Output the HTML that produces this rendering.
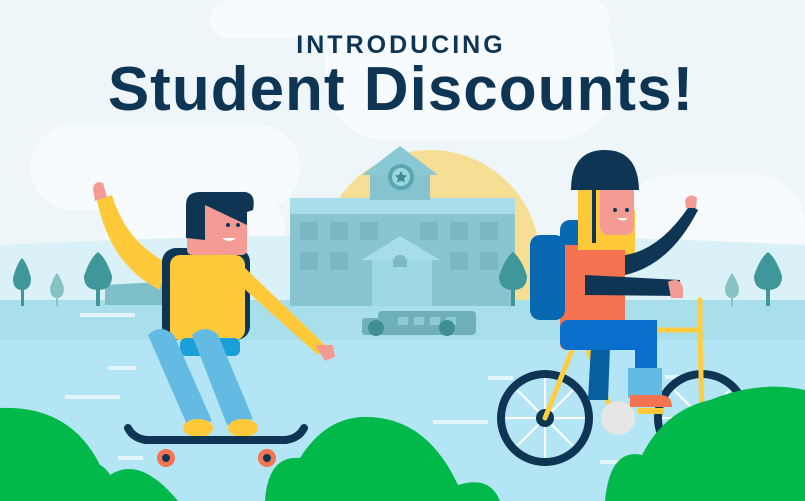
<!DOCTYPE html>
<html><head><meta charset="utf-8"><style>
html,body{margin:0;padding:0;width:805px;height:501px;overflow:hidden;background:#eef6fa}
svg{display:block}
</style></head><body>
<svg width="805" height="501" viewBox="0 0 805 501" xmlns="http://www.w3.org/2000/svg">
<rect width="805" height="501" fill="#eef6fa"/>
<g fill="#f7fbfd">
<rect x="210" y="0" width="400" height="38" rx="19"/>
<rect x="325" y="0" width="290" height="140" rx="60"/>
<rect x="30" y="125" width="270" height="85" rx="42"/>
<rect x="105" y="190" width="180" height="88" rx="40"/>
<rect x="620" y="175" width="185" height="110" rx="50"/>
<rect x="530" y="255" width="240" height="60" rx="30"/>
</g>
<path d="M0 245 Q400 225 805 245 L805 310 L0 310Z" fill="#d9f1f7"/>
<circle cx="430" cy="260" r="110" fill="#f6df95"/>
<rect x="0" y="300" width="805" height="40" fill="#a9dfeb"/>
<rect x="0" y="340" width="805" height="161" fill="#b4e5f4"/>
<path d="M105 285 L160 282 L200 305 L105 305Z" fill="#7fbfca"/>
<rect x="290" y="198" width="225" height="108" fill="#88c5d1"/>
<rect x="290" y="198" width="225" height="16" fill="#a8dde9"/>
<g fill="#7ab8c4">
<rect x="300" y="222" width="18" height="18"/><rect x="330" y="222" width="18" height="18"/><rect x="360" y="222" width="18" height="18"/><rect x="420" y="222" width="18" height="18"/><rect x="450" y="222" width="18" height="18"/><rect x="480" y="222" width="18" height="18"/>
<rect x="300" y="252" width="18" height="18"/><rect x="330" y="252" width="18" height="18"/><rect x="450" y="252" width="18" height="18"/><rect x="480" y="252" width="18" height="18"/>
</g>
<rect x="370" y="172" width="60" height="28" fill="#86c3cf"/>
<path d="M362 175 L400 146 L438 175Z" fill="#8ac8d4"/>
<circle cx="401" cy="177" r="13" fill="#5aa6ae"/><circle cx="401" cy="177" r="9" fill="#9ad6e0"/>
<path d="M401 171 l2 4 4 .5 -3 3 1 4 -4-2 -4 2 1-4 -3-3 4-.5z" fill="#3f8d94"/>
<rect x="372" y="258" width="60" height="48" fill="#9ed8e3"/>
<path d="M362 260 L400 236 L440 260Z" fill="#a6dde8"/>
<path d="M393 262 a7 7 0 0 1 14 0 v5 h-14z" fill="#7ab8c4"/>
<rect x="378" y="311" width="98" height="24" rx="4" fill="#6fb0b8"/>
<rect x="362" y="318" width="20" height="17" rx="3" fill="#6fb0b8"/>
<g fill="#8ccbd5"><rect x="398" y="317" width="10" height="8"/><rect x="414" y="317" width="10" height="8"/><rect x="430" y="317" width="10" height="8"/><rect x="446" y="317" width="10" height="8"/></g>
<circle cx="376" cy="328" r="8" fill="#3e8f92"/><circle cx="447" cy="328" r="8" fill="#3e8f92"/>
<g fill="#3f9799">
<path d="M22 290 q-9 0 -9-12 q4-15 9-20 q5 5 9 20 q0 12 -9 12z"/><rect x="21" y="288" width="3" height="18"/>
<path d="M98 290 q-14 0 -14-14 q6-18 14-24 q8 6 14 24 q0 14 -14 14z"/><rect x="96" y="288" width="4" height="18"/>
<path d="M513 290 q-14 0 -14-14 q6-18 14-24 q8 6 14 24 q0 14 -14 14z"/><rect x="511" y="288" width="4" height="18"/>
<path d="M768 290 q-14 0 -14-14 q6-18 14-24 q8 6 14 24 q0 14 -14 14z"/><rect x="766" y="288" width="4" height="18"/>
</g>
<g fill="#86c1c4">
<path d="M57 298 q-7 0 -7-10 q3-10 7-15 q4 5 7 15 q0 10 -7 10z"/><rect x="56" y="296" width="2" height="10"/>
<path d="M732 298 q-7 0 -7-10 q3-10 7-15 q4 5 7 15 q0 10 -7 10z"/><rect x="731" y="296" width="2" height="10"/>
</g>
<g fill="#e4f6fb"><rect x="80" y="313" width="55" height="4"/><rect x="108" y="366" width="28" height="4"/><rect x="65" y="395" width="55" height="4"/><rect x="433" y="420" width="55" height="4"/><rect x="488" y="376" width="25" height="4"/><rect x="665" y="375" width="30" height="4"/><rect x="600" y="460" width="55" height="4"/><rect x="118" y="456" width="25" height="4"/></g>
<text x="401" y="53" text-anchor="middle" font-family="Liberation Sans, sans-serif" font-weight="bold" font-size="25" letter-spacing="3" fill="#0e3553">INTRODUCING</text>
<text x="401" y="110" text-anchor="middle" font-family="Liberation Sans, sans-serif" font-weight="bold" font-size="62" letter-spacing="1" fill="#0e3553">Student Discounts!</text>

<g>
<path d="M97 200 L112 195 Q125 240 165 262 L160 290 Q110 265 97 200Z" fill="#ffc93a"/>
<path d="M93 188 q2-8 10-5 l4 14 -12 4z" fill="#f49c93"/>
<rect x="162" y="248" width="88" height="92" rx="14" fill="#0e3553"/>
<rect x="170" y="255" width="75" height="85" rx="10" fill="#ffc93a"/>
<path d="M245 268 L325 345 L318 355 L240 285Z" fill="#ffc93a"/>
<path d="M315 345 l18 0 l2 12 l-10 4z" fill="#f49c93"/>
<rect x="187" y="195" width="60" height="60" rx="5" fill="#f49c93"/>
<path d="M186 238 L186 205 Q186 192 200 192 L240 192 Q257 190 253 210 L247 212 L247 225 L205 205 L205 240Z" fill="#0e3553"/>
<circle cx="228" cy="225" r="2" fill="#0e3553"/><circle cx="238" cy="225" r="2" fill="#0e3553"/>
<path d="M222 238 q8 6 14 0z" fill="#fff"/>
<rect x="180" y="338" width="60" height="18" rx="6" fill="#1b9fd8"/>
<path d="M148 335 q12-12 26 0 l38 86 -24 6z" fill="#63bbe3"/>
<path d="M192 335 q14-12 26 0 l35 84 -26 6z" fill="#63bbe3"/>
<ellipse cx="198" cy="428" rx="15" ry="9" fill="#ffc93a"/><ellipse cx="243" cy="428" rx="15" ry="9" fill="#ffc93a"/>
<path d="M128 428 q5 10 18 12 l140 0 q13-2 18-12" stroke="#0e3553" stroke-width="8" fill="none" stroke-linecap="round"/>
<circle cx="166" cy="458" r="9" fill="#f47451"/><circle cx="166" cy="458" r="4" fill="#0e3553"/>
<circle cx="267" cy="458" r="9" fill="#f47451"/><circle cx="267" cy="458" r="4" fill="#0e3553"/>
</g>
<g>
<circle cx="545" cy="418" r="44" fill="none" stroke="#0e3553" stroke-width="8"/>
<circle cx="702" cy="418" r="44" fill="none" stroke="#0e3553" stroke-width="8"/>
<g stroke="#fff" stroke-width="2"><path d="M545 378 V458 M505 418 H585 M517 390 L573 446 M573 390 L517 446"/><path d="M702 378 V458 M662 418 H742 M674 390 L730 446 M730 390 L674 446"/></g>
<circle cx="545" cy="418" r="9" fill="#0e3553"/><circle cx="702" cy="418" r="9" fill="#0e3553"/>
<path d="M545 418 L580 330 L700 330 L702 418 M580 330 L615 420 M700 300 L700 330" stroke="#ffcd3f" stroke-width="5" fill="none" stroke-linecap="round"/>
<path d="M580 305 h20" stroke="#0e3553" stroke-width="8" stroke-linecap="round"/>
<path d="M603 300 q-10 0 -10 10 l-5 90 l20 0 l3-80z" fill="#075f9f"/>
<circle cx="618" cy="418" r="17" fill="#e6e6e6"/>
<rect x="560" y="220" width="55" height="45" rx="10" fill="#0868b1"/>
<rect x="585" y="210" width="50" height="45" fill="#ffc93a"/>
<rect x="560" y="245" width="65" height="105" rx="6" fill="#f47451"/>
<rect x="530" y="235" width="35" height="85" rx="10" fill="#0868b1"/>
<rect x="560" y="320" width="95" height="30" rx="8" fill="#0a6fcc"/>
<rect x="635" y="320" width="22" height="70" fill="#0a6fcc"/>
<rect x="628" y="368" width="34" height="30" fill="#63bbe3"/>
<path d="M630 395 l30 0 q12 0 12 12 l-42 0z" fill="#f47451"/>
<rect x="638" y="408" width="26" height="6" fill="#ffc93a"/>
<path d="M585 275 L680 280 L680 296 L585 295Z" fill="#0e3553"/>
<path d="M668 282 q12-6 15 6 l0 10 l-12 0z" fill="#f49c93"/>
<path d="M625 255 Q660 250 690 205 L698 210 Q670 265 625 275Z" fill="#0e3553"/>
<path d="M685 200 q5-8 12-2 l-1 10 -10 0z" fill="#f49c93"/>
<path d="M578 190 h56 v60 h-56z" fill="#ffc93a"/>
<rect x="600" y="185" width="34" height="50" rx="8" fill="#f49c93"/>
<circle cx="615" cy="210" r="2" fill="#0e3553"/><circle cx="627" cy="210" r="2" fill="#0e3553"/>
<path d="M617 218 q6 5 11 0z" fill="#fff"/>
<path d="M571 190 q0-40 34-40 q33 0 34 40z" fill="#0e3553"/>
<rect x="592" y="188" width="4" height="55" fill="#0e3553"/>
</g>
<g fill="#00b94a">
<path d="M0 408 Q70 405 100 465 Q112 470 120 501 L0 501Z"/>
<path d="M0 501 L0 470 Q80 440 110 475 Q140 455 178 501Z"/>
<path d="M265 501 Q268 455 300 458 Q330 410 380 418 Q430 425 458 485 Q490 475 500 501Z"/>
<path d="M605 501 Q610 448 642 455 Q665 410 710 400 Q760 380 805 390 L805 501Z"/>
</g>
</svg>
</body></html>
